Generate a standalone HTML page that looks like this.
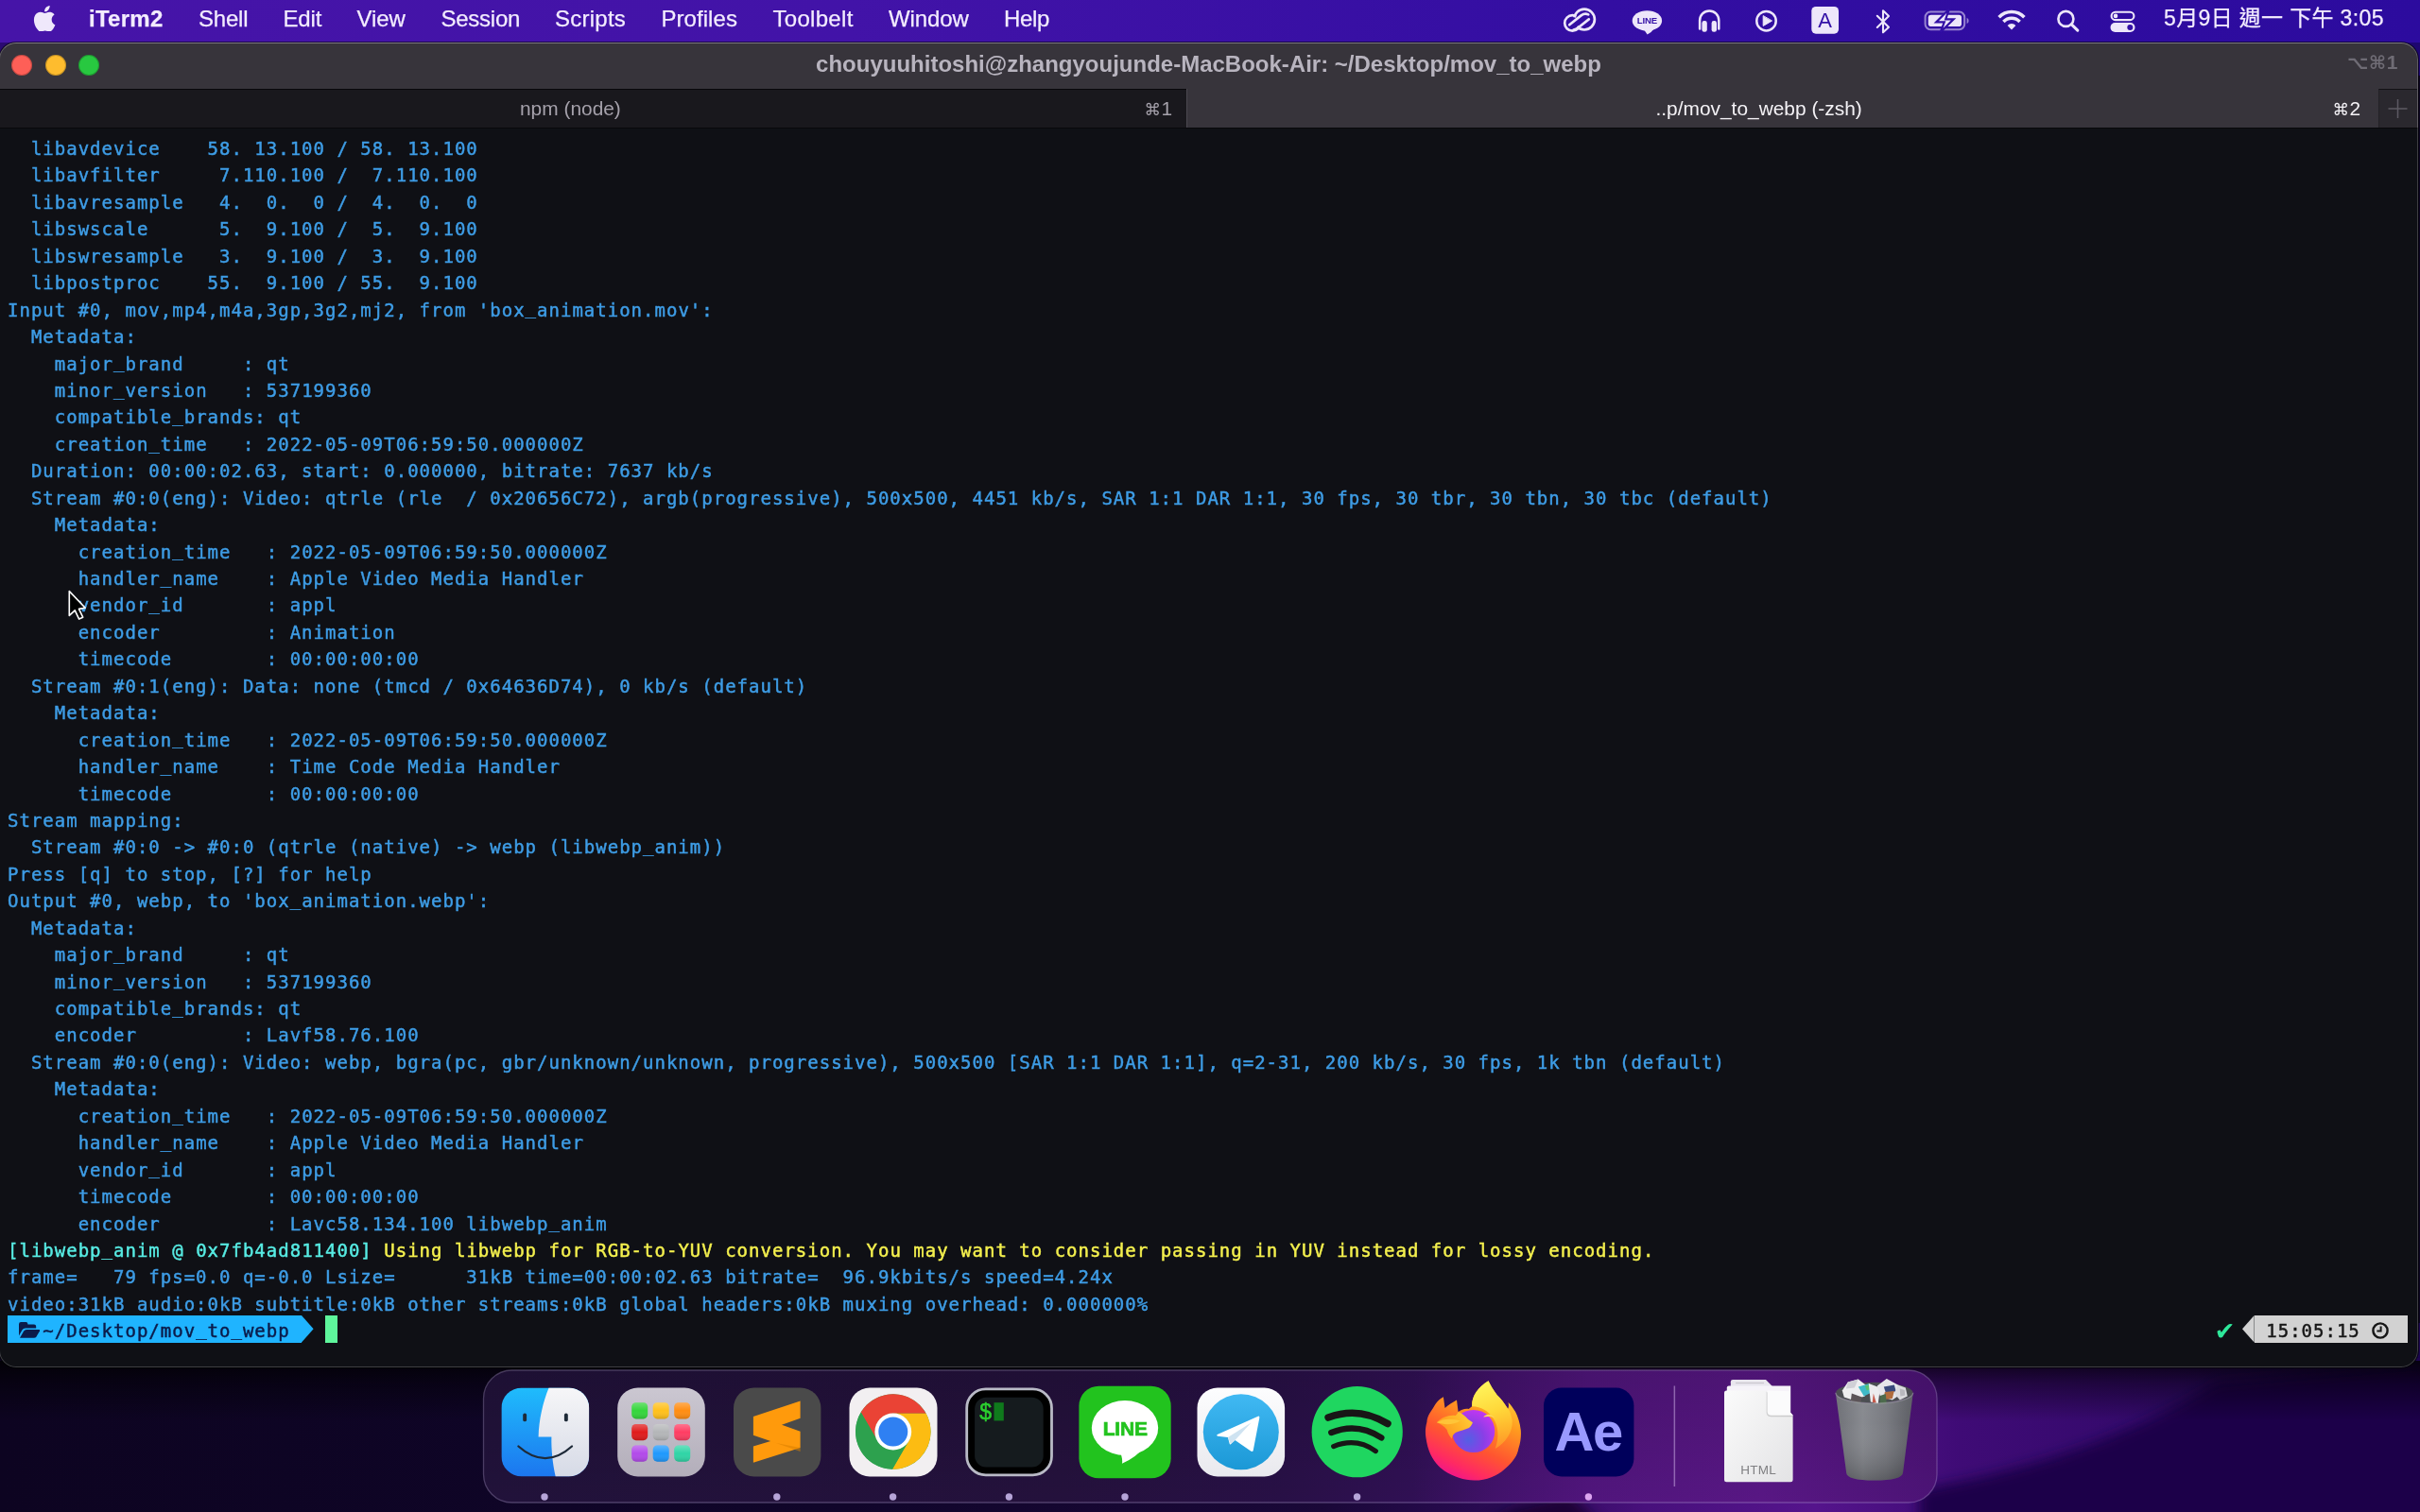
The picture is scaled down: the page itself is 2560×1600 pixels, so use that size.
<!DOCTYPE html>
<html lang="zh-Hant">
<head>
<meta charset="utf-8">
<title>iTerm2 — ~/Desktop/mov_to_webp</title>
<style>
*{box-sizing:border-box;margin:0;padding:0}
html,body{width:2560px;height:1600px;overflow:hidden;background:#0c0420}
body{position:relative;font-family:"Liberation Sans","Noto Sans CJK TC",sans-serif;color:#fff}
#wall{position:absolute;left:0;top:1400px}
#wshadow{position:absolute;left:0;top:1440px;width:2560px;height:64px;background:linear-gradient(180deg,rgba(0,0,0,.8),rgba(0,0,0,.45) 35%,rgba(0,0,0,0))}
#undertop{position:absolute;left:0;top:40px;width:2560px;height:40px;background:linear-gradient(90deg,#2b0a72,#1e0670)}
/* menu bar */
#menubar{will-change:transform;position:absolute;left:0;top:0;width:2560px;height:45px;background:linear-gradient(90deg,#4614a8 0,#4213a8 900px,#330ea2 1700px,#2c0b9e 2560px)}
#menubar .mi{position:absolute;top:0;height:44px;line-height:39.6px;font-size:24px;color:#f3ecff;white-space:nowrap;-webkit-text-stroke:.25px #f3ecff}
#menubar .mi.b{font-weight:bold}
/* window */
#win{position:absolute;left:-1px;top:45px;width:2559px;height:1402px;border-radius:18px;background:#0f1015;overflow:hidden;box-shadow:0 0 0 1px rgba(0,0,0,.6)}
#win:after{content:"";position:absolute;left:0;top:0;right:0;bottom:0;border-radius:18px;border:1.8px solid rgba(255,255,255,.2);border-top-color:rgba(255,255,255,.34);pointer-events:none}
#titlebar{will-change:transform;position:absolute;left:0;top:0;width:100%;height:49px;background:#37343b}
.tl{position:absolute;top:13.4px;width:22px;height:22px;border-radius:50%;box-shadow:inset 0 0 0 1px rgba(0,0,0,.22)}
#title{position:absolute;left:0;top:0;width:100%;height:49px;line-height:46px;text-align:center;font-weight:bold;font-size:24px;color:#b8b4bf;white-space:nowrap}
#tabbar{will-change:transform;position:absolute;left:0;top:49px;width:100%;height:41px;background:#37343b}
#tab1{position:absolute;left:0;top:0;width:1256px;height:41px;background:#19181d;border-top:1.6px solid #08070b}
#tab2{position:absolute;left:1256px;top:0;width:1261px;height:41px;border-left:1.3px solid #4b4850}
#plus{position:absolute;left:2517px;top:0;width:41px;height:41px;background:#2a282e;border-top:1.5px solid #121115;border-left:1.5px solid #232126}
.tt{position:absolute;top:0;height:41px;line-height:42px;font-size:20.9px;white-space:nowrap}
.tt .k{font-family:"DejaVu Sans",sans-serif;font-size:17.5px;position:relative;top:-.5px;margin-right:.5px}
#optk{position:absolute;left:2484px;top:6px;height:30px;line-height:30px;font-size:21px;font-weight:bold;color:#6f6c75;white-space:nowrap}
#tabline{position:absolute;left:0;top:89.5px;width:100%;height:1.8px;background:#08080b}
/* terminal */
#term{will-change:transform;position:absolute;left:8.5px;top:95.5px;width:2540px;font-family:"DejaVu Sans Mono","Liberation Mono",monospace;font-size:19px;letter-spacing:1.006px;color:#3e9de6;-webkit-text-stroke:.45px currentColor}
.ln{height:28.444px;line-height:32.444px;white-space:pre;position:relative}
.abs{position:absolute;top:0}
.seg{position:absolute;top:0;height:28.6px;background:#1fb4ff}
.seg2{position:absolute;top:0;height:28.6px;background:#d2d2d2}
.pt{color:#0b1b4a}.rt{color:#161616}.ck{color:#2ee89a;-webkit-text-stroke:0;font-size:30px;margin-left:-3px;line-height:29px}
.u{position:relative;top:-2.2px}
.cur{width:12.6px;height:28.6px;background:#5ef59b}
.c{color:#57ece4}.y{color:#f4f04e}
</style>
</head>
<body>
<svg id="wall" width="2560" height="200" viewBox="0 1400 2560 200">
 <defs>
  <linearGradient id="wbase" x1="0" x2="2560" y1="0" y2="0" gradientUnits="userSpaceOnUse">
   <stop offset="0" stop-color="#0d0421"/><stop offset=".35" stop-color="#10052a"/><stop offset=".547" stop-color="#1a0838"/><stop offset=".62" stop-color="#2a0a54"/>
   <stop offset=".68" stop-color="#48107c"/><stop offset=".75" stop-color="#55148c"/><stop offset=".81" stop-color="#3f0b76"/><stop offset=".9" stop-color="#32096a"/><stop offset="1" stop-color="#1c0550"/>
  </linearGradient>
  <filter id="wblur" x="-10%" y="-30%" width="120%" height="160%"><feGaussianBlur stdDeviation="7"/></filter>
 </defs>
 <rect x="0" y="1400" width="2560" height="200" fill="url(#wbase)"/>
 <path d="M2030,1620 L2030,1576 C2150,1556 2262,1516 2345,1462 L2600,1440 L2600,1620 Z" fill="#1a0548" filter="url(#wblur)"/>
 <path d="M1560,1620 L1600,1596 L1660,1580 L1700,1620 Z" fill="#12052c" filter="url(#wblur)" opacity=".8"/>
</svg>
<div id="wshadow"></div>

<div id="undertop"></div>
<div id="menubar">
<svg id="apple" style="position:absolute;left:34.5px;top:5.6px" width="24.5" height="27.6" viewBox="2.4 0 19.4 24"><path fill="#efe8fb" d="M12.152 6.896c-.948 0-2.415-1.078-3.96-1.04-2.04.027-3.91 1.183-4.961 3.014-2.117 3.675-.546 9.103 1.519 12.09 1.013 1.454 2.208 3.09 3.792 3.039 1.52-.065 2.09-.987 3.935-.987 1.831 0 2.35.987 3.96.948 1.637-.026 2.676-1.48 3.676-2.948 1.156-1.688 1.636-3.325 1.662-3.415-.039-.013-3.182-1.221-3.22-4.857-.026-3.04 2.48-4.494 2.597-4.559-1.429-2.09-3.623-2.324-4.39-2.376-2-.156-3.675 1.09-4.61 1.09zM15.53 3.83c.843-1.012 1.4-2.427 1.245-3.83-1.207.052-2.662.805-3.532 1.818-.78.896-1.454 2.338-1.273 3.714 1.338.104 2.715-.688 3.559-1.701"/></svg>
<svg id="mbicons" style="position:absolute;left:1640px;top:0" width="640" height="44" viewBox="1640 0 640 44" fill="none" stroke="#ede6fa" stroke-linecap="round" stroke-linejoin="round">
 <!-- creative cloud -->
 <defs>
  <mask id="ccm1" maskUnits="userSpaceOnUse" x="1640" y="0" width="60" height="44"><rect x="1640" y="0" width="60" height="44" fill="#fff"/><circle cx="1663.4" cy="24.4" r="6.9" fill="#000"/></mask>
  <mask id="ccm2" maskUnits="userSpaceOnUse" x="1640" y="0" width="60" height="44"><rect x="1640" y="0" width="60" height="44" fill="#fff"/><circle cx="1676" cy="20.6" r="9.6" fill="#000"/></mask>
 </defs>
 <g stroke-width="2.7">
  <circle cx="1676" cy="20.6" r="10.9" mask="url(#ccm1)"/>
  <circle cx="1663.4" cy="24.4" r="8.2" mask="url(#ccm2)"/>
  <path d="M1660.2,26.2 L1672.6,16.4 Q1676.4,13.6 1680.2,15.4 M1664.6,31.6 Q1667.4,31 1669.6,29.2 L1680.8,20.4"/>
 </g>
 <!-- line bubble -->
 <g stroke="none" fill="#ede6fa">
  <ellipse cx="1742.4" cy="21.9" rx="15.7" ry="10.7"/>
  <path d="M1738.5,30.5 L1742.6,36.6 Q1747,34.5 1750.5,29.5 Z"/>
  <text x="1742.4" y="25.4" text-anchor="middle" font-family="Liberation Sans, sans-serif" font-weight="bold" font-size="9.6" fill="#3511a7" letter-spacing="-.2">LINE</text>
 </g>
 <!-- headphones -->
 <path stroke-width="2.5" d="M1798.1,30.5 V21.6 A10.1,10.1 0 0 1 1818.3,21.6 V30.5"/>
 <g stroke="none" fill="#ede6fa"><rect x="1800.4" y="22" width="5.4" height="11.8" rx="2.4"/><rect x="1810.6" y="22" width="5.4" height="11.8" rx="2.4"/></g>
 <!-- play -->
 <circle cx="1868.5" cy="22.2" r="10.2" stroke-width="2.5"/>
 <path d="M1865.2,17 V27.4 L1874.2,22.2 Z" fill="#ede6fa" stroke-width="1"/>
 <!-- input source A -->
 <rect x="1916.3" y="6.9" width="28.7" height="28.8" rx="4.6" fill="#ede6fa" stroke="none"/>
 <text x="1930.7" y="29.3" text-anchor="middle" font-family="Liberation Sans, sans-serif" font-size="22" fill="#3310a6" stroke="none">A</text>
 <!-- bluetooth -->
 <path stroke-width="2.1" d="M1985.8,16.8 L1998,28.7 L1992,34.3 V11.3 L1998,17 L1985.8,28.9"/>
 <!-- battery -->
 <rect x="2036.6" y="12.6" width="41.6" height="18.6" rx="5.6" stroke="rgba(237,230,250,.55)" stroke-width="2"/>
 <path d="M2080.6,18.7 Q2082.6,19.4 2082.6,21.9 Q2082.6,24.4 2080.6,25.1 Z" fill="rgba(237,230,250,.55)" stroke="none"/>
 <rect x="2039.8" y="15.8" width="35.2" height="12.2" rx="2.8" fill="#ede6fa" stroke="none"/>
 <path d="M2061.8,9.8 L2048.2,23.4 H2056.8 L2052.8,34 L2066.6,20.4 H2058.2 Z" fill="#ede6fa" stroke="#3310a6" stroke-width="2.2" stroke-linejoin="miter"/>
 <!-- wifi -->
 <g stroke-width="3.5" stroke-linecap="butt">
  <path d="M2114.6,18.2 A18.4,18.4 0 0 1 2141.4,18.2"/>
  <path d="M2119.4,23 A11.8,11.8 0 0 1 2136.6,23"/>
 </g>
 <path d="M2128,31.6 L2123.6,27 A6,6 0 0 1 2132.4,27 Z" fill="#ede6fa" stroke="none"/>
 <!-- search -->
 <circle cx="2185.4" cy="19.9" r="8" stroke-width="2.6"/>
 <path d="M2191.4,25.9 L2197.8,32.2" stroke-width="3.1"/>
 <!-- control center -->
 <rect x="2233.6" y="12.7" width="23.8" height="8.4" rx="4.2" stroke-width="2.1"/>
 <circle cx="2238" cy="16.9" r="2.3" fill="#ede6fa" stroke="none"/>
 <rect x="2232.5" y="24" width="26" height="10" rx="5" fill="#ede6fa" stroke="none"/>
 <circle cx="2253.3" cy="29" r="3" fill="#3310a6" stroke="none"/>
</svg>

 <span class="mi b" style="left:94px;letter-spacing:0.27px">iTerm2</span>
 <span class="mi" style="left:210px;letter-spacing:-0.20px">Shell</span>
 <span class="mi" style="left:299.5px;letter-spacing:-0.17px">Edit</span>
 <span class="mi" style="left:377.5px;letter-spacing:-0.10px">View</span>
 <span class="mi" style="left:466.5px;letter-spacing:-0.26px">Session</span>
 <span class="mi" style="left:587px;letter-spacing:0.24px">Scripts</span>
 <span class="mi" style="left:699.5px;letter-spacing:0.05px">Profiles</span>
 <span class="mi" style="left:817.5px;letter-spacing:0.30px">Toolbelt</span>
 <span class="mi" style="left:940px;letter-spacing:-0.12px">Window</span>
 <span class="mi" style="left:1062px;letter-spacing:-0.32px">Help</span>
 <span class="mi" id="clock" style="left:2289px;font-size:23px;letter-spacing:.35px">5月9日 週一 下午 3:05</span>
</div>

<div id="win">
 <div id="titlebar">
  <div class="tl" style="left:13.2px;background:#fe5f57"></div>
  <div class="tl" style="left:48.8px;background:#febc2e"></div>
  <div class="tl" style="left:84.3px;background:#28c840"></div>
  <div id="optk"><span style="font-family:'DejaVu Sans',sans-serif;font-size:19.5px;position:relative;top:-.5px;letter-spacing:.6px">⌥⌘</span>1</div>
  <div id="title">chouyuuhitoshi@zhangyoujunde-MacBook-Air: ~/Desktop/mov_to_webp</div>
 </div>
 <div id="tabbar">
  <div id="tab1"></div>
  <div id="tab2"></div>
  <div id="plus"><svg width="41" height="41" viewBox="0 0 41 41" style="position:absolute;left:-1.5px;top:-1.5px"><path d="M10.5,20.9 H30.5 M20.5,10.9 V30.9" stroke="#5d5a63" stroke-width="1.5" fill="none"/></svg></div>
  <span class="tt" style="left:551px;color:#a5a1ab">npm (node)</span>
  <span class="tt" style="left:1211.5px;color:#a5a1ab"><span class="k">⌘</span>1</span>
  <span class="tt" style="left:1752.5px;color:#f4f2f6">..p/mov_to_webp (-zsh)</span>
  <span class="tt" style="left:2468.5px;color:#f4f2f6"><span class="k">⌘</span>2</span>
 </div>
 <div id="tabline"></div>
 <div id="term">
<div class="ln">  libavdevice    58. 13.100 / 58. 13.100</div>
<div class="ln">  libavfilter     7.110.100 /  7.110.100</div>
<div class="ln">  libavresample   4.  0.  0 /  4.  0.  0</div>
<div class="ln">  libswscale      5.  9.100 /  5.  9.100</div>
<div class="ln">  libswresample   3.  9.100 /  3.  9.100</div>
<div class="ln">  libpostproc    55.  9.100 / 55.  9.100</div>
<div class="ln">Input #0, mov,mp4,m4a,3gp,3g2,mj2, from 'box<span class="u">_</span>animation.mov':</div>
<div class="ln">  Metadata:</div>
<div class="ln">    major<span class="u">_</span>brand     : qt</div>
<div class="ln">    minor<span class="u">_</span>version   : 537199360</div>
<div class="ln">    compatible<span class="u">_</span>brands: qt</div>
<div class="ln">    creation<span class="u">_</span>time   : 2022-05-09T06:59:50.000000Z</div>
<div class="ln">  Duration: 00:00:02.63, start: 0.000000, bitrate: 7637 kb/s</div>
<div class="ln">  Stream #0:0(eng): Video: qtrle (rle  / 0x20656C72), argb(progressive), 500x500, 4451 kb/s, SAR 1:1 DAR 1:1, 30 fps, 30 tbr, 30 tbn, 30 tbc (default)</div>
<div class="ln">    Metadata:</div>
<div class="ln">      creation<span class="u">_</span>time   : 2022-05-09T06:59:50.000000Z</div>
<div class="ln">      handler<span class="u">_</span>name    : Apple Video Media Handler</div>
<div class="ln">      vendor<span class="u">_</span>id       : appl</div>
<div class="ln">      encoder         : Animation</div>
<div class="ln">      timecode        : 00:00:00:00</div>
<div class="ln">  Stream #0:1(eng): Data: none (tmcd / 0x64636D74), 0 kb/s (default)</div>
<div class="ln">    Metadata:</div>
<div class="ln">      creation<span class="u">_</span>time   : 2022-05-09T06:59:50.000000Z</div>
<div class="ln">      handler<span class="u">_</span>name    : Time Code Media Handler</div>
<div class="ln">      timecode        : 00:00:00:00</div>
<div class="ln">Stream mapping:</div>
<div class="ln">  Stream #0:0 -&gt; #0:0 (qtrle (native) -&gt; webp (libwebp<span class="u">_</span>anim))</div>
<div class="ln">Press [q] to stop, [?] for help</div>
<div class="ln">Output #0, webp, to 'box<span class="u">_</span>animation.webp':</div>
<div class="ln">  Metadata:</div>
<div class="ln">    major<span class="u">_</span>brand     : qt</div>
<div class="ln">    minor<span class="u">_</span>version   : 537199360</div>
<div class="ln">    compatible<span class="u">_</span>brands: qt</div>
<div class="ln">    encoder         : Lavf58.76.100</div>
<div class="ln">  Stream #0:0(eng): Video: webp, bgra(pc, gbr/unknown/unknown, progressive), 500x500 [SAR 1:1 DAR 1:1], q=2-31, 200 kb/s, 30 fps, 1k tbn (default)</div>
<div class="ln">    Metadata:</div>
<div class="ln">      creation<span class="u">_</span>time   : 2022-05-09T06:59:50.000000Z</div>
<div class="ln">      handler<span class="u">_</span>name    : Apple Video Media Handler</div>
<div class="ln">      vendor<span class="u">_</span>id       : appl</div>
<div class="ln">      timecode        : 00:00:00:00</div>
<div class="ln">      encoder         : Lavc58.134.100 libwebp<span class="u">_</span>anim</div>
<div class="ln"><span class="c">[libwebp<span class="u">_</span>anim @ 0x7fb4ad811400]</span> <span class="y">Using libwebp for RGB-to-YUV conversion. You may want to consider passing in YUV instead for lossy encoding.</span></div>
<div class="ln">frame=   79 fps=0.0 q=-0.0 Lsize=      31kB time=00:00:02.63 bitrate=  96.9kbits/s speed=4.24x</div>
<div class="ln">video:31kB audio:0kB subtitle:0kB other streams:0kB global headers:0kB muxing overhead: 0.000000%</div>
<div class="ln pl"><div class="seg" style="left:-0.5px;width:311.60px"></div><svg class="abs" style="left:311.10px;top:0;width:12.6px;height:28.6px" viewBox="0 0 12.6 28.6"><path d="M0,0 L12.6,14.3 L0,28.6 Z" fill="#1fb4ff"/></svg><svg class="abs" style="left:11.6px;top:7px;width:22.4px;height:16.8px" viewBox="0 0 22.4 16.8"><path fill="#0b1b4a" d="M0,2.2 Q0,0 2.2,0 H7.4 Q9.4,0 9.4,2 V2.6 H16 Q18.2,2.6 18.2,4.8 V6.5 H7 Q4.6,6.5 3.4,8.6 L0,14.4 Z"/><path fill="#0b1b4a" d="M1,16.8 L5.2,9.6 Q6.2,8 8,8 H21.2 Q22.8,8 22,9.4 L18.6,15.3 Q17.7,16.8 15.9,16.8 Z"/></svg><span class="abs pt" style="left:37.33px">~/Desktop/mov<span class="u">_</span>to<span class="u">_</span>webp</span><div class="abs cur" style="left:335.99px"></div><span class="abs ck" style="left:2339.47px">✔</span><svg class="abs" style="left:2364.36px;top:0;width:12.6px;height:28.6px" viewBox="0 0 12.6 28.6"><path d="M12.6,0 L0,14.3 L12.6,28.6 Z" fill="#d2d2d2"/></svg><div class="seg2" style="left:2376.56px;width:162.02px"></div><span class="abs rt" style="left:2389.25px">15:05:15</span><svg class="abs" style="left:2500.75px;top:7.2px;width:18px;height:18px" viewBox="0 0 18 18"><circle cx="9" cy="9" r="7.6" fill="none" stroke="#161616" stroke-width="2.4"/><path d="M9.6,4.6 V9.6 H5.4" fill="none" stroke="#161616" stroke-width="2"/></svg></div>
 </div>
</div>

<svg id="mouse" style="position:absolute;left:70.5px;top:622.8px" width="23" height="34.5" viewBox="-2.4 -2.7 24 36"><path d="M0,0 V27 L6.2,21.2 L10.8,30.8 L15,28.8 L10.6,19.6 L17.6,18.4 Z" fill="#000" stroke="#fff" stroke-width="1.7" stroke-linejoin="round"/></svg>
<svg id="docksvg" style="position:absolute;left:500px;top:1440px" width="1570" height="160" viewBox="500 1440 1570 160" font-family="Liberation Sans, sans-serif">
 <defs>
  <linearGradient id="dockbg" x1="511" x2="2049" y1="0" y2="0" gradientUnits="userSpaceOnUse">
   <stop offset="0" stop-color="#21123a"/><stop offset=".4" stop-color="#24113c"/><stop offset=".55" stop-color="#281046"/><stop offset=".64" stop-color="#301054"/>
   <stop offset=".7" stop-color="#43126c"/><stop offset=".76" stop-color="#50157c"/><stop offset=".88" stop-color="#581784"/><stop offset="1" stop-color="#4c1376"/>
  </linearGradient>
  <linearGradient id="fblue" x1="0" y1="0" x2="0" y2="1"><stop offset="0" stop-color="#1fbcfc"/><stop offset="1" stop-color="#1c76ef"/></linearGradient>
  <linearGradient id="fwhite" x1="0" y1="0" x2="0" y2="1"><stop offset="0" stop-color="#f6f6f8"/><stop offset="1" stop-color="#d6dae6"/></linearGradient>
  <linearGradient id="lpbg" x1="0" y1="0" x2="0" y2="1"><stop offset="0" stop-color="#cbc7d1"/><stop offset="1" stop-color="#b3aeba"/></linearGradient>
  <linearGradient id="gloss" x1="0" y1="0" x2="0" y2="1"><stop offset="0" stop-color="#fff" stop-opacity=".28"/><stop offset=".5" stop-color="#fff" stop-opacity="0"/><stop offset="1" stop-color="#000" stop-opacity=".16"/></linearGradient>
  <linearGradient id="dockv" x1="0" y1="0" x2="0" y2="1"><stop offset="0" stop-color="#000" stop-opacity=".12"/><stop offset="1" stop-color="#000" stop-opacity="0"/></linearGradient>
  <linearGradient id="tgbg" x1="0" y1="0" x2="0" y2="1"><stop offset="0" stop-color="#41b9f3"/><stop offset="1" stop-color="#1b98d6"/></linearGradient>
  <linearGradient id="tgsq" x1="0" y1="0" x2="0" y2="1"><stop offset="0" stop-color="#fdfdfe"/><stop offset="1" stop-color="#e9e9ee"/></linearGradient>
  <linearGradient id="docg" x1="0" y1="0" x2="1" y2="1"><stop offset="0" stop-color="#fbfbfb"/><stop offset="1" stop-color="#e3e3e5"/></linearGradient>
  <linearGradient id="trg" x1="0" y1="0" x2="1" y2="0"><stop offset="0" stop-color="#6a6e71"/><stop offset=".35" stop-color="#858a8c"/><stop offset=".65" stop-color="#767a7d"/><stop offset="1" stop-color="#565a5d"/></linearGradient>
  <linearGradient id="trv" x1="0" y1="0" x2="0" y2="1"><stop offset="0" stop-color="#fff" stop-opacity=".06"/><stop offset=".35" stop-color="#fff" stop-opacity=".04"/><stop offset="1" stop-color="#000" stop-opacity=".22"/></linearGradient>
  <linearGradient id="ffbody" x1=".75" y1=".05" x2=".3" y2="1"><stop offset="0" stop-color="#ffd83a"/><stop offset=".3" stop-color="#ff9a1f"/><stop offset=".62" stop-color="#ff5530"/><stop offset=".85" stop-color="#ff2a62"/><stop offset="1" stop-color="#ee1290"/></linearGradient>
  <radialGradient id="ffglobe" cx=".38" cy=".7" r=".75"><stop offset="0" stop-color="#535fe4"/><stop offset=".5" stop-color="#8a3fe6"/><stop offset="1" stop-color="#c636f2"/></radialGradient>
  <linearGradient id="ffflame" x1=".4" y1="0" x2=".6" y2="1"><stop offset="0" stop-color="#fff55c"/><stop offset=".45" stop-color="#ffd83a"/><stop offset="1" stop-color="#ffb02a" stop-opacity=".55"/></linearGradient>
  <linearGradient id="ffarm" x1="0" y1=".7" x2="1" y2=".2"><stop offset="0" stop-color="#ff8f20"/><stop offset=".6" stop-color="#ffb628"/><stop offset="1" stop-color="#ffcf3a"/></linearGradient>
  <clipPath id="fclip"><rect width="92.8" height="93.9" rx="21.5"/></clipPath>
 </defs>
 <rect x="511.5" y="1450" width="1537.5" height="140" rx="30" fill="url(#dockbg)" stroke="rgba(190,170,220,.32)" stroke-width="1.3"/>
 <rect x="511.5" y="1450" width="1537.5" height="140" rx="30" fill="url(#dockv)"/>

 <!-- Finder -->
 <g transform="translate(530.4,1468.5)"><g clip-path="url(#fclip)">
  <rect width="93" height="94" fill="url(#fblue)"/>
  <path d="M50.2,0 C44,15 39.6,34 39.2,52 H53 C52.6,66 54.4,81 57.3,94 H93 V0 Z" fill="url(#fwhite)"/>
  <rect x="22.8" y="27" width="3.9" height="8.8" rx="1.9" fill="#1e2a38"/><rect x="66.5" y="27" width="3.9" height="8.8" rx="1.9" fill="#1e2a38"/>
  <path d="M18,62 Q46.5,87.2 74.6,62" fill="none" stroke="#1e2a38" stroke-width="2.3" stroke-linecap="round"/>
 </g></g>

 <!-- Launchpad -->
 <g transform="translate(653.2,1468.5)">
  <rect width="92.6" height="93.9" rx="21.5" fill="url(#lpbg)"/>
  <g>
   <rect x="15" y="15.7" width="17" height="17.2" rx="4.6" fill="#35d63c"/><rect x="37.5" y="15.7" width="17" height="17.2" rx="4.6" fill="#ffc01b"/><rect x="60" y="15.7" width="17" height="17.2" rx="4.6" fill="#ff8d12"/>
   <rect x="15" y="38.5" width="17" height="17.2" rx="4.6" fill="#e01c1c"/><rect x="37.5" y="38.5" width="17" height="17.2" rx="4.6" fill="#b4b6b8"/><rect x="60" y="38.5" width="17" height="17.2" rx="4.6" fill="#ff3d63"/>
   <rect x="15" y="61" width="17" height="17.2" rx="4.6" fill="#b24aea"/><rect x="37.5" y="61" width="17" height="17.2" rx="4.6" fill="#1f99fd"/><rect x="60" y="61" width="17" height="17.2" rx="4.6" fill="#2fd5a6"/>
   <rect x="15" y="15.7" width="17" height="17.2" rx="4.6" fill="url(#gloss)"/><rect x="37.5" y="15.7" width="17" height="17.2" rx="4.6" fill="url(#gloss)"/><rect x="60" y="15.7" width="17" height="17.2" rx="4.6" fill="url(#gloss)"/><rect x="15" y="38.5" width="17" height="17.2" rx="4.6" fill="url(#gloss)"/><rect x="37.5" y="38.5" width="17" height="17.2" rx="4.6" fill="url(#gloss)"/><rect x="60" y="38.5" width="17" height="17.2" rx="4.6" fill="url(#gloss)"/><rect x="15" y="61" width="17" height="17.2" rx="4.6" fill="url(#gloss)"/><rect x="37.5" y="61" width="17" height="17.2" rx="4.6" fill="url(#gloss)"/><rect x="60" y="61" width="17" height="17.2" rx="4.6" fill="url(#gloss)"/>
  </g>
 </g>

 <!-- Sublime -->
 <g transform="translate(776,1468.5)">
  <rect width="92.4" height="93.9" rx="21.5" fill="#4a4a4a"/>
  <path d="M70.6,14.1 L20.9,30.6 V50.2 L39.2,56.5 L20.9,62 V79.3 L70.6,63.6 V46.3 L51,39.2 L70.6,32.2 Z" fill="#ff9a0c"/>
  <path d="M39.2,56.5 L70.6,66.800 V63.600 L20.9,79.3 V62 Z" fill="#e98a00" opacity=".0"/><path d="M39.2,56.5 L70.6,67.5 V63.600 L45,58.500 Z" fill="#d97f00" opacity=".55"/>
 </g>

 <!-- Chrome -->
 <g transform="translate(898.5,1468.5)">
  <rect width="93" height="93.9" rx="21.5" fill="#f2eff1"/>
  <g transform="translate(46.3,46.5)">
   <circle r="39.8" fill="#34a853"/>
   <path id="chsec" d="M0,-19.2 L34.86,-19.2 A39.8,39.8 0 0 0 -34.03,-20.6 L-16.6,9.6 A19.2,19.2 0 0 1 0,-19.2 Z" fill="#ea4335"/>
   <path d="M0,-19.2 L34.86,-19.2 A39.8,39.8 0 0 0 -34.03,-20.6 L-16.6,9.6 A19.2,19.2 0 0 1 0,-19.2 Z" fill="#fcbc12" transform="rotate(120)"/>
   <path d="M0,-19.2 L34.86,-19.2 A39.8,39.8 0 0 0 -34.03,-20.6 L-16.6,9.6 A19.2,19.2 0 0 1 0,-19.2 Z" fill="#2da14e" transform="rotate(240)"/>
   <circle r="19.4" fill="#fff"/><circle r="15.5" fill="#2f80f2"/>
  </g>
 </g>

 <!-- iTerm -->
 <g transform="translate(1021.3,1468.5)">
  <rect x="1.4" y="1.4" width="89.8" height="91" rx="20" fill="#000" stroke="#b9bac6" stroke-width="2.8"/>
  <rect x="9.8" y="10.3" width="72.6" height="73.6" rx="12" fill="#151b1e"/>
  <text x="15" y="33.4" font-size="23" fill="#2bd02f" stroke="#2bd02f" stroke-width=".5">$</text>
  <rect x="30.2" y="15.7" width="10.3" height="19.2" fill="#0f7a1c"/>
 </g>

 <!-- LINE -->
 <g transform="translate(1141.4,1466.7)">
  <rect width="97.3" height="97.6" rx="21" fill="#22c31e"/>
  <ellipse cx="48.6" cy="44.3" rx="35.2" ry="29" fill="#fff"/>
  <path d="M44,71 Q46.5,78 45.5,82 Q60,76 72,62 Z" fill="#fff"/>
  <text x="48.8" y="52.2" text-anchor="middle" font-size="21" font-weight="bold" fill="#22c31e" stroke="#22c31e" stroke-width=".7" letter-spacing="-.2">LINE</text>
 </g>

 <!-- Telegram -->
 <g transform="translate(1266.5,1468.5)">
  <rect width="92.6" height="93.9" rx="21.5" fill="url(#tgsq)"/>
  <circle cx="46.3" cy="46.7" r="40" fill="url(#tgbg)"/>
  <path d="M21.2,49.4 L64.3,30.2 Q66.2,29.6 65.8,32 L59.2,66.4 Q58.6,68.2 56.6,67 L40,55.4 L35.4,59.8 Q34.4,60.4 34.2,59.2 L32.4,52.6 L21.6,51.2 Q19.8,50.4 21.2,49.4 Z" fill="#fff"/>
  <path d="M32.4,52.6 L57,37 L40,55.4 L35.4,59.8 Z" fill="#cfe3f1"/>
 </g>

 <!-- Spotify -->
 <g transform="translate(1435.7,1515.2)">
  <circle r="48.1" fill="#1fd660"/>
  <g fill="none" stroke="#181616" stroke-linecap="round">
   <path d="M-30.6,-15.2 Q2,-27.4 32.2,-8.6" stroke-width="7.6"/>
   <path d="M-27.4,0.8 Q0,-10.4 25.6,6.2" stroke-width="6.4"/>
   <path d="M-25,15.4 Q-1,5.6 19.6,20.4" stroke-width="5.2"/>
  </g>
 </g>

 <!-- Firefox -->
 <g transform="translate(1557.7,1514)">
  <path d="M16.8,-52.7 C6,-46 -1,-37 -0.6,-25.7 L-4,-23 C-8,-24 -12,-22 -15.1,-20 L-16.7,-32.5 C-21,-30 -26,-27 -29.2,-24 L-30.8,-35.8 C-36,-33 -39,-29 -41.7,-24 C-46,-18 -48,-14 -48.2,-9.5 C-50,-3 -50,2 -49.4,6.600 C-47,25 -40,35 -30.4,42.1 C-20,49 -9,52.6 1.9,52.6 C15,52.6 26,48 34.1,40.5 C43,33 47.5,26 48.7,18.7 C51,12 51.5,5 51.1,-0.6 C50,-9 48,-15 45.4,-20 C43,-24 40.5,-27.5 37.8,-30.1 C38.5,-27.5 38.5,-25 37.4,-23.2 C34,-29 30,-34 26,-37.8 C22,-43 19,-48 16.8,-52.7 Z" fill="url(#ffbody)"/>
  <path d="M16.8,-52.7 C6,-46 -1,-37 -0.6,-25.7 C8,-26 17,-21 22,-13 C28,-4 28,8 24,19 C35,13 43,1 42,-11 C41,-17 39,-22 37.4,-23.2 C34,-29 30,-34 26,-37.8 C22,-43 19,-48 16.8,-52.7 Z" fill="url(#ffflame)"/>
  <circle cx="1" cy="0.5" r="22.6" fill="url(#ffglobe)"/>
  <path d="M-37.7,-8.7 C-33,-14 -25,-17 -18,-16 C-16,-18 -15.500,-19 -15.1,-20 C-12,-19 -8,-16 -4.6,-12 L0.2,-8.7 C-1,-6 -2,-4 -3.8,-3 C-8,-1 -13,0 -17.5,1.8 C-20,3.500 -21.500,5 -21.800,8.600 C-24.500,5.500 -26.500,2 -27,-1 C-30,-5 -34,-7 -37.7,-8.7 Z" fill="url(#ffarm)"/>
  <path d="M-37.7,-8.7 C-31,-13.5 -21,-13 -13,-10.500 C-20,-6 -30,-6 -37.7,-8.7 Z" fill="#ffc93c" opacity=".85"/>
  <path d="M11.500,-14.600 C15,-18.500 20,-18 23.500,-13.500 C19,-15.500 15,-15.300 11.500,-14.600 Z" fill="#ffd75a"/>
 </g>

 <!-- After Effects -->
 <g transform="translate(1633,1468.6)">
  <rect width="95.4" height="93.8" rx="19" fill="#00005b"/>
  <text x="47.2" y="66.4" text-anchor="middle" font-size="58" font-weight="bold" fill="#9999ff" letter-spacing="-1.5">Ae</text>
 </g>

 <!-- separator -->
 <rect x="1770.6" y="1466.5" width="1.5" height="106.5" fill="rgba(235,215,255,.42)"/>

 <!-- HTML document -->
 <g transform="translate(1824,1460.5)">
  <path d="M9,-0.4 H44 L50.4,6 V40 H6.800 V1.800 Q6.800,-0.4 9,-0.4 Z" fill="#e9e6ee"/>
  <path d="M12,3 H42" stroke="#c9c6ce" stroke-width="1.2"/>
  <path d="M4.800,6 H70.2 V60 H2.800 V8 Q2.800,6 4.800,6 Z" fill="#f6f3f9"/>
  <path d="M2.400,10.900 H45.600 L72.600,36.700 V105.400 Q72.600,107.800 70.200,107.800 H2.400 Q0,107.800 0,105.400 V13.300 Q0,10.900 2.400,10.900 Z" fill="url(#docg)"/>
  <path d="M44.600,12 V33.800 Q44.600,38.800 49.600,38.800 H72.600 Z" fill="#000" opacity=".14"/>
  <path d="M45.600,10.900 V33 Q45.600,37.300 50,37.300 H72.600 L69.800,34 L69.800,11.700 Z" fill="#fbfbfc"/>
  <text x="36.1" y="99.2" text-anchor="middle" font-size="13.5" letter-spacing=".2" fill="#808083">HTML</text>
 </g>

 <!-- Trash -->
 <g transform="translate(1941.8,1460.5)">
  <ellipse cx="41" cy="13.3" rx="40.6" ry="11" fill="#4b4e52"/>
  <path d="M7,11 L13,2 L24,-1 L33,6 L31,17 L18,21 L9,18 Z" fill="#eeeef0"/>
  <path d="M13,2 L24,-1 L20,8 L11,9 Z" fill="#d0d0d6"/>
  <path d="M24,7 L36,3.500 L40,12 L30,17 Z" fill="#3fb9c8"/><path d="M31,6 L37,4.500 L39,9 L33,11 Z" fill="#58c070"/>
  <path d="M17,14 L28,18 L26,25 L16,22 Z" fill="#5c5458"/>
  <path d="M35,3.500 L47,8 L45,25 L37,23 Z" fill="#ececee"/><path d="M40,14 L43,24 L39,23.500 Z" fill="#c65a4a"/>
  <path d="M44,6 L54,-1.500 L66,5 L70,14 L60,21 L47,17 Z" fill="#e6e6ea"/>
  <path d="M51,7 L62,5 L64,12 L53,13 Z" fill="#3a4a7c"/><path d="M52,12.500 L62,11.500 L60,19.500 L51,20.500 Z" fill="#b06c3c"/>
  <path d="M47,16.500 L53,14.500 L54,25 L47,26 Z" fill="#4c6a4c"/>
  <path d="M66,5 L74,8 L76,17 L68,21 L62,14 Z" fill="#dadade"/><path d="M68,9 L73,10.500 L73.500,16 L68.500,17 Z" fill="#b8b8be"/>
  <path d="M0,13.3 A41,11.3 0 0 0 82,13.3 L71.2,98 Q70,106 41,106 Q12,106 11.400,98 Z" fill="url(#trg)" opacity=".96"/>
  <path d="M0,13.3 A41,11.3 0 0 0 82,13.3 L71.2,98 Q70,106 41,106 Q12,106 11.400,98 Z" fill="url(#trv)"/>
  <path d="M0,13.3 A41,11.3 0 0 0 82,13.3" fill="none" stroke="#a2a6a8" stroke-width="1.4" opacity=".55"/>
 </g>

 <!-- running dots -->
 <g fill="#b6a4d8">
  <circle cx="576" cy="1584" r="3.7"/><circle cx="821.8" cy="1584" r="3.7"/><circle cx="944.6" cy="1584" r="3.7"/><circle cx="1067.4" cy="1584" r="3.7"/><circle cx="1190" cy="1584" r="3.7"/><circle cx="1435.6" cy="1584" r="3.7"/><circle cx="1680.4" cy="1584" r="3.7" fill="#dca5f0"/>
 </g>
</svg>

</body>
</html>
